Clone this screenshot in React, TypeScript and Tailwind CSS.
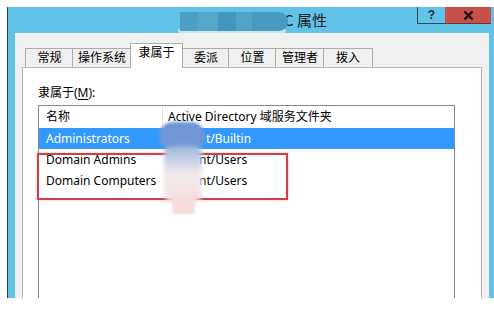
export default function App() {
  const tabs = [
    { label: '常规', cls: 'w-[48px] h-[19px]' },
    { label: '操作系统', cls: 'w-[59px] h-[19px] -ml-px' },
    { label: '隶属于', cls: 'w-[53px] h-[25px] -ml-px -mb-px bg-white relative z-10 border-r pb-[6px]', active: true },
    { label: '委派', cls: 'w-[47px] h-[19px] -ml-px' },
    { label: '位置', cls: 'w-[48px] h-[19px] -ml-px' },
    { label: '管理者', cls: 'w-[49px] h-[19px] -ml-px' },
    { label: '拨入', cls: 'w-[50px] h-[19px] -ml-px border-r' },
  ];

  return (
    <div className="relative w-[494px] h-[309px] overflow-hidden bg-white font-['Noto_Sans','Noto_Sans_CJK_SC',sans-serif] text-[12px] text-black">
      <div className="pt-[7px] pl-[7px] h-[298px] flex">
        <div className="flex-1 flex flex-col border-l border-[#1f4257] bg-[#60c2e6]">
          {/* Title bar */}
          <div className="h-[26px] flex items-start shrink-0">
            <div className="w-[276px] shrink-0" />
            <div className="pt-[2px] text-[15px] leading-[22px] text-[#1b1b1b] font-['Noto_Sans_CJK_SC',sans-serif]">C 属性</div>
            <div className="flex-1" />
            <div className="flex mr-[3px]">
              <div className="w-[28px] h-[17px] border-l border-b border-[#2a4b5c] flex items-center justify-center text-[12px] font-bold leading-none text-[#1c2a33] font-['Liberation_Sans',sans-serif]">?</div>
              <div className="w-[46px] h-[17px] bg-[#c8504a] border-b border-[#7a2e2a] flex items-center justify-center">
                <svg width="11" height="9" viewBox="0 0 11 9">
                  <path d="M1.5 0.5 L9.5 8.5 M9.5 0.5 L1.5 8.5" stroke="#1a0a08" strokeWidth="2.2" />
                </svg>
              </div>
            </div>
          </div>
          {/* Body */}
          <div className="flex-1 ml-[7px] mr-[5px] bg-[#f0f0f0] pt-[10px] px-[7px] overflow-hidden flex flex-col">
            <div className="flex items-end h-[24px] pl-[3px] shrink-0">
              {tabs.map((t) => (
                <div
                  key={t.label}
                  className={`${t.cls} border-l border-t border-[#acacac] flex items-center justify-center leading-none ${t.active ? '' : 'bg-[#f0f0f0]'}`}
                >
                  {t.label}
                </div>
              ))}
            </div>
            <div className="h-[300px] shrink-0 border border-[#b4b4b4] bg-white pl-[15px] pt-[17px]">
              <div className="leading-[16px]">
                隶属于(<span className="underline underline-offset-2">M</span>):
              </div>
              <div className="mt-[4px] w-[417px] h-[300px] border border-[#828790] bg-white">
                <div className="flex h-[22px] items-center">
                  <div className="w-[124px] h-full border-r border-[#e5e5e5] pl-[7px] flex items-center">名称</div>
                  <div className="pl-[5px]">Active Directory 域服务文件夹</div>
                </div>
                <div className="flex h-[21px] items-center bg-[#3399ff] text-white">
                  <div className="w-[124px] pl-[7px]">Administrators</div>
                  <div className="pl-[43px]">t/Builtin</div>
                </div>
                <div className="flex h-[21px] items-center">
                  <div className="w-[124px] pl-[7px]">Domain Admins</div>
                  <div className="pl-[36px]">nt/Users</div>
                </div>
                <div className="flex h-[21px] items-center">
                  <div className="w-[124px] pl-[7px]">Domain Computers</div>
                  <div className="pl-[36px]">nt/Users</div>
                </div>
              </div>
            </div>
          </div>
        </div>
      </div>

      {/* Title blur (redaction) */}
      <div className="absolute left-[178px] top-[29px] w-[108px] h-[4px] bg-[#c6e6f1] rounded-sm blur-[0.5px]" />
      <div className="absolute left-[180px] top-[12px] w-[108px] h-[19px] flex overflow-hidden rounded-r-[9px]">
        <div className="w-[18px] h-full bg-[#4c9fc4]" />
        <div className="w-[20px] h-full bg-[#56a6c9]" />
        <div className="w-[18px] h-full bg-[#4397be]" />
        <div className="w-[16px] h-full bg-[#52a3c8]" />
        <div className="w-[36px] h-full bg-[#4799c0]" />
      </div>

      {/* Red annotation rectangle */}
      <div className="absolute left-[37px] top-[153px] w-[251px] h-[47px] border-2 border-[#cf4048] shadow-[0_0_2px_rgba(207,64,72,0.5)]" />

      {/* Blurred redaction blobs */}
      <div className="absolute left-[159px] top-[122px] w-[46px] h-[28px] rounded-[14px] bg-[#6f96d6] blur-[1.5px]" />
      <div className="absolute left-[164px] top-[146px] w-[38px] h-[56px] rounded-[8px] bg-gradient-to-b from-[#9eb4dd] via-[#f1eaec] to-[#f3dede] blur-[2px]" />
      <div className="absolute left-[172px] top-[197px] w-[23px] h-[17px] rounded-[4px] bg-[#f6dcdc] blur-[1px]" />
    </div>
  );
}
